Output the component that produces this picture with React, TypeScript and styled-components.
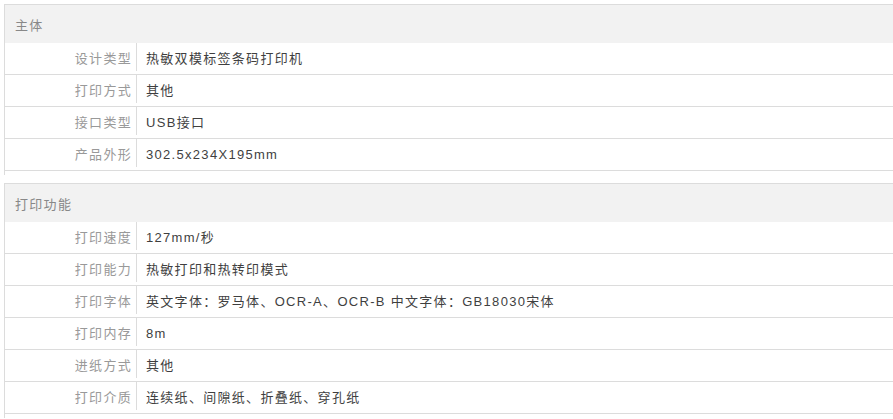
import styled, { createGlobalStyle } from "styled-components";

const GlobalStyle = createGlobalStyle`
  html, body {
    margin: 0;
    padding: 0;
    background: #fff;
    overflow: hidden;
  }
  body {
    font-family: "Liberation Sans", "Noto Sans CJK SC", sans-serif;
    font-size: 13px;
    letter-spacing: 1.3px;
  }
`;

const Page = styled.div`
  padding: 4px 0 0 4px;
  width: 910px;
  display: flex;
  flex-direction: column;
  gap: 8px;
`;

const Section = styled.div`
  border-top: 1px solid #dcdcdc;
  border-left: 1px solid #dcdcdc;
  padding-bottom: 4px;
`;

const Header = styled.div`
  height: 38px;
  background-color: #f2f2f2;
  color: #888;
  display: flex;
  align-items: center;
  padding-left: 10px;
`;

const Row = styled.div`
  display: flex;
  height: 31px;
  border-bottom: 1px solid #dcdcdc;
`;

const Label = styled.div`
  width: 127px;
  height: 28px;
  flex-shrink: 0;
  padding-right: 4px;
  border-right: 1px solid #dcdcdc;
  color: #999;
  text-align: right;
  line-height: 31px;
`;

const Value = styled.div`
  padding-left: 9px;
  color: #3f3f3f;
  line-height: 31px;
`;

type Spec = { label: string; value: string };

const groups: { title: string; items: Spec[] }[] = [
  {
    title: "主体",
    items: [
      { label: "设计类型", value: "热敏双模标签条码打印机" },
      { label: "打印方式", value: "其他" },
      { label: "接口类型", value: "USB接口" },
      { label: "产品外形", value: "302.5x234X195mm" },
    ],
  },
  {
    title: "打印功能",
    items: [
      { label: "打印速度", value: "127mm/秒" },
      { label: "打印能力", value: "热敏打印和热转印模式" },
      { label: "打印字体", value: "英文字体：罗马体、OCR-A、OCR-B 中文字体：GB18030宋体" },
      { label: "打印内存", value: "8m" },
      { label: "进纸方式", value: "其他" },
      { label: "打印介质", value: "连续纸、间隙纸、折叠纸、穿孔纸" },
    ],
  },
];

export default function App() {
  return (
    <>
      <GlobalStyle />
      <Page>
        {groups.map((g) => (
          <Section key={g.title}>
            <Header>{g.title}</Header>
            {g.items.map((it) => (
              <Row key={it.label}>
                <Label>{it.label}</Label>
                <Value>{it.value}</Value>
              </Row>
            ))}
          </Section>
        ))}
      </Page>
    </>
  );
}
